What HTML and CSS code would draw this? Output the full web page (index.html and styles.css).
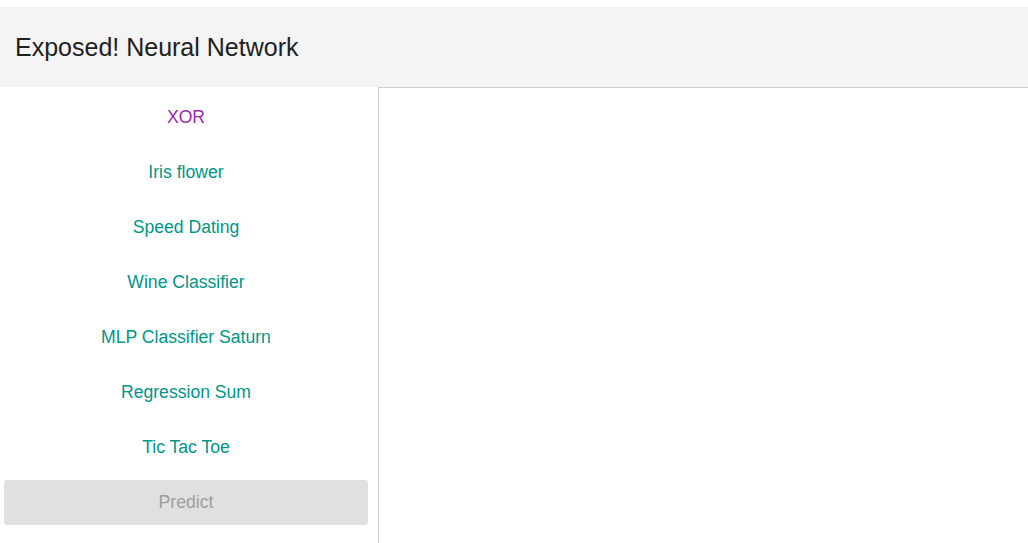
FILE: index.html
```html
<!DOCTYPE html>
<html>
<head>
<meta charset="utf-8">
<link rel="stylesheet" href="styles.css">
</head>
<body>
<div class="app">
  <header class="topbar">
    <h1 class="title">Exposed! Neural Network</h1>
  </header>
  <div class="main">
    <aside class="sidebar">
      <nav class="nav">
        <a class="nav-item active">XOR</a>
        <a class="nav-item">Iris flower</a>
        <a class="nav-item">Speed Dating</a>
        <a class="nav-item">Wine Classifier</a>
        <a class="nav-item">MLP Classifier Saturn</a>
        <a class="nav-item">Regression Sum</a>
        <a class="nav-item">Tic Tac Toe</a>
      </nav>
      <button class="predict" disabled>Predict</button>
    </aside>
    <section class="content"></section>
  </div>
</div>
</body>
</html>
```
FILE: styles.css
```css
html, body {
  margin: 0;
  padding: 0;
  height: 100%;
  background: #fff;
  font-family: "Liberation Sans", Arial, sans-serif;
}
.app {
  padding-top: 7px;
  height: 100%;
  box-sizing: border-box;
  display: flex;
  flex-direction: column;
}
.topbar {
  height: 80px;
  background: #f4f4f4;
  display: flex;
  align-items: center;
  padding-left: 15px;
  flex-shrink: 0;
}
.title {
  margin: 0;
  font-weight: normal;
  font-size: 25px;
  color: #212121;
}
.main {
  flex: 1;
  display: flex;
  min-height: 0;
}
.sidebar {
  width: 378px;
  box-sizing: border-box;
  padding: 1px 6px 0 0;
  display: flex;
  flex-direction: column;
}
.nav {
  display: flex;
  flex-direction: column;
}
.nav-item {
  height: 55px;
  box-sizing: border-box;
  padding-top: 2px;
  line-height: 55px;
  text-align: center;
  font-size: 17.6px;
  color: #009688;
  cursor: pointer;
}
.nav-item.active {
  color: #9c27b0;
}
.predict {
  margin: 7px 4px 0 4px;
  height: 45px;
  border: none;
  border-radius: 3px;
  background: #e0e0e0;
  color: #9e9e9e;
  font-family: "Liberation Sans", Arial, sans-serif;
  font-size: 17.6px;
}
.content {
  flex: 1;
  border-left: 1px solid #cfcfcf;
  border-top: 1px solid #cfcfcf;
}
```
